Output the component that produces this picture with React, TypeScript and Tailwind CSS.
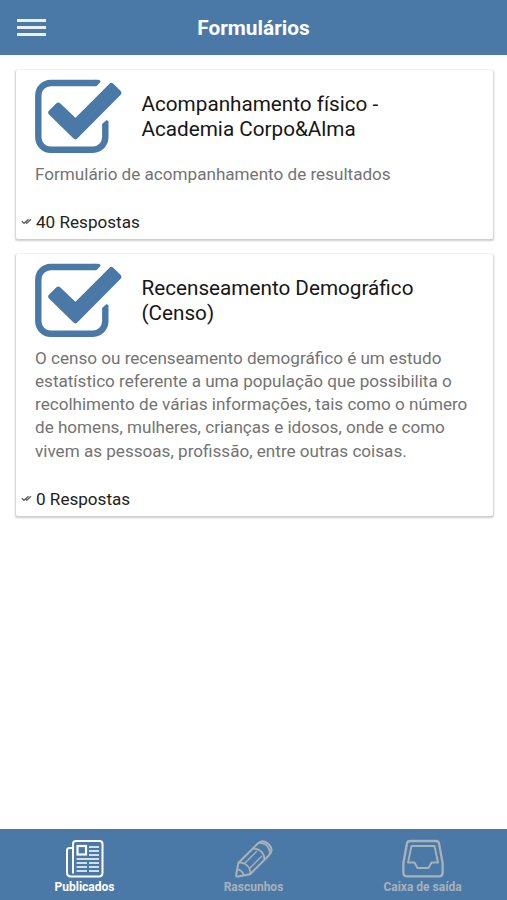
import type { ReactNode } from "react";

interface FormItem {
  title: string;
  description: string;
  answers: number;
}

const forms: FormItem[] = [
  {
    title: "Acompanhamento físico - Academia Corpo&Alma",
    description: "Formulário de acompanhamento de resultados",
    answers: 40,
  },
  {
    title: "Recenseamento Demográfico (Censo)",
    description:
      "O censo ou recenseamento demográfico é um estudo estatístico referente a uma população que possibilita o recolhimento de várias informações, tais como o número de homens, mulheres, crianças e idosos, onde e como vivem as pessoas, profissão, entre outras coisas.",
    answers: 0,
  },
];

function CheckboxLogo() {
  return (
    <svg viewBox="0 0 88 75" className="h-[75px] w-[88px] shrink-0" fill="none">
      <path
        d="M61 4H16A12.5 12.5 0 0 0 3.3 16.5V58.3A12.5 12.5 0 0 0 16 70.8H58A12.5 12.5 0 0 0 70.3 58.3V46"
        stroke="#4a79a8"
        strokeWidth="6.4"
      />
      <path d="M60.5 0.8H63Q66 1 65.4 3L61.5 7.2H60.5Z" fill="#4a79a8" />
      <path d="M67.1 46.5V45L71.3 41.3Q73.5 41 73.5 43V46.5Z" fill="#4a79a8" />
      <path
        d="M16.3 33.7L23.3 26.7L40.4 43L76.4 7L83.3 13.9L40.4 57.2Z"
        fill="#4a79a8"
        stroke="#4a79a8"
        strokeWidth="6"
        strokeLinejoin="round"
      />
    </svg>
  );
}

function DoubleCheck() {
  return (
    <svg viewBox="0 0 11 7" className="mr-[4px] mb-[3px] h-[7px] w-[11px]" fill="none" stroke="#666" strokeWidth="1.5">
      <path d="M0.8 3.2L3 5.2L7.5 1.3" />
      <path d="M4.6 4L5.7 5.2L10 1.2" />
    </svg>
  );
}

function FormCard({ form }: { form: FormItem }) {
  return (
    <article className="rounded-[2px] bg-white pt-[8.5px] pb-[4px] shadow-[0_1px_2px_0.5px_rgba(0,0,0,0.2)]">
      <div className="flex items-center px-[19.5px]">
        <CheckboxLogo />
        <h2 className="ml-[18.5px] w-[290px] pt-[1px] text-[20.7px] leading-[24.5px] text-[#161616]">
          {form.title}
        </h2>
      </div>
      <p className="mt-[9px] px-[19.5px] text-[17.1px] leading-[23.2px] text-[#737373]">
        {form.description}
      </p>
      <div className="mt-[25.5px] flex h-[24px] items-center pl-[5.5px] text-[17.1px] text-[#222]">
        <DoubleCheck />
        {form.answers} Respostas
      </div>
    </article>
  );
}

function NewspaperIcon() {
  return (
    <svg viewBox="0 0 40 40" className="size-10" fill="none" stroke="currentColor" strokeWidth="2">
      <path d="M8 34.5V5Q8 2 11 2H34.5Q37.5 2 37.5 5V33.5Q37.5 37.5 34 37.5H6Q2 37.5 2 33.5V11.5Q2 9 4.5 9H8" />
      <rect x="12.5" y="7" width="8.5" height="8.5" strokeWidth="2.2" />
      <path
        d="M24 8H34M24 12H34M24 16H34M11.5 20H34M11.5 24H22M24 24H34M11.5 28H22M24 28H34M11.5 32H22M24 32H34"
        strokeWidth="1.5"
      />
    </svg>
  );
}

function PencilIcon() {
  return (
    <svg viewBox="0 0 40 40" className="size-10" fill="none" stroke="currentColor" strokeWidth="2" strokeLinejoin="round">
      <path d="M4 37.6Q1.8 38 2.2 35.8L4.3 24L23.5 4.8Q29 -0.5 34.7 5.2Q40.3 11 34.8 16.5L16 35.3Z" />
      <path d="M4.3 24Q9.8 22.8 13.2 26.5Q17 30.2 16 35.3M2.8 30.2Q8.5 31 9.7 36.7" strokeWidth="1.7" />
      <path d="M18.5 9.8Q23.5 9 27.4 12.7Q31 16.5 30.2 21.3M25 3.8Q30 3.5 33 6.8Q36.4 10.3 35.8 15.2" strokeWidth="1.7" />
      <path d="M10.5 24.5L23 12M15.5 29.5L28 17" strokeWidth="1.4" />
    </svg>
  );
}

function OutboxIcon() {
  return (
    <svg viewBox="0 0 42 40" className="h-10 w-[42px]" fill="none" stroke="currentColor" strokeWidth="2.3" strokeLinejoin="round">
      <path d="M8 2H34Q36.5 2 37 4.5L40.6 24V34Q40.6 37.3 37.3 37.3H4.7Q1.4 37.3 1.4 34V24L5 4.5Q5.5 2 8 2Z" />
      <path d="M9.5 7H32.5L36 23.5H29.5L26.5 29H15.5L12.5 23.5H6Z" strokeWidth="1.9" />
    </svg>
  );
}

function TabItem({ icon, label, active = false }: { icon: ReactNode; label: string; active?: boolean }) {
  return (
    <button
      className={`flex flex-1 flex-col items-center pt-[10px] ${active ? "text-white" : "text-[#a9b1b9]"}`}
    >
      {icon}
      <span className="pt-[0.5px] text-[12px] leading-[15px] font-bold">{label}</span>
    </button>
  );
}

export default function App() {
  return (
    <div className="flex h-screen w-full flex-col bg-white font-['Roboto',sans-serif]">
      <header className="grid h-[54.5px] shrink-0 grid-cols-[1fr_auto_1fr] items-center bg-[#4a79a8] px-4 text-white">
        <button aria-label="Menu" className="ml-[0.5px] flex w-[29px] flex-col gap-[4px]">
          <span className="h-[3px] bg-[#e9f0f7]" />
          <span className="h-[3px] bg-[#e9f0f7]" />
          <span className="h-[3px] bg-[#e9f0f7]" />
        </button>
        <h1 className="pt-[2px] text-[20.8px] font-bold">Formulários</h1>
      </header>

      <main className="flex flex-1 flex-col gap-[15px] pt-[15.5px] pr-[14.5px] pl-[15.5px]">
        {forms.map((form) => (
          <FormCard key={form.title} form={form} />
        ))}
      </main>

      <nav className="flex h-[71px] shrink-0 bg-[#4a79a8]">
        <TabItem icon={<NewspaperIcon />} label="Publicados" active />
        <TabItem icon={<PencilIcon />} label="Rascunhos" />
        <TabItem icon={<OutboxIcon />} label="Caixa de saída" />
      </nav>
    </div>
  );
}
